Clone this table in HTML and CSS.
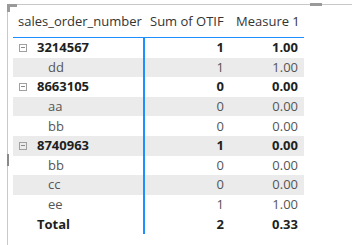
FILE: index.html
```html
<!DOCTYPE html>
<html>
<head>
<meta charset="utf-8">
<link rel="stylesheet" href="styles.css">
</head>
<body>
<div class="frame">
  <span class="corner"></span>
  <span class="grip"></span>
  <span class="edge-handle"></span>
  <div class="matrix">
    <div class="row head">
      <div class="c c1">sales_order_number</div>
      <div class="c c2">Sum of OTIF</div>
      <div class="c c3">Measure 1</div>
    </div>
    <div class="row group">
      <div class="c c1"><span class="toggle"></span>3214567</div>
      <div class="c c2 num">1</div>
      <div class="c c3 num">1.00</div>
    </div>
    <div class="row child shade">
      <div class="c c1">dd</div>
      <div class="c c2 num">1</div>
      <div class="c c3 num">1.00</div>
    </div>
    <div class="row group">
      <div class="c c1"><span class="toggle"></span>8663105</div>
      <div class="c c2 num">0</div>
      <div class="c c3 num">0.00</div>
    </div>
    <div class="row child shade">
      <div class="c c1">aa</div>
      <div class="c c2 num">0</div>
      <div class="c c3 num">0.00</div>
    </div>
    <div class="row child">
      <div class="c c1">bb</div>
      <div class="c c2 num">0</div>
      <div class="c c3 num">0.00</div>
    </div>
    <div class="row group shade">
      <div class="c c1"><span class="toggle"></span>8740963</div>
      <div class="c c2 num">1</div>
      <div class="c c3 num">0.00</div>
    </div>
    <div class="row child">
      <div class="c c1">bb</div>
      <div class="c c2 num">0</div>
      <div class="c c3 num">0.00</div>
    </div>
    <div class="row child shade">
      <div class="c c1">cc</div>
      <div class="c c2 num">0</div>
      <div class="c c3 num">0.00</div>
    </div>
    <div class="row child">
      <div class="c c1">ee</div>
      <div class="c c2 num">1</div>
      <div class="c c3 num">1.00</div>
    </div>
    <div class="row total">
      <div class="c c1">Total</div>
      <div class="c c2 num">2</div>
      <div class="c c3 num">0.33</div>
    </div>
  </div>
</div>
</body>
</html>
```

FILE: styles.css
```css
html, body {
  margin: 0;
  padding: 0;
  background: #ffffff;
}
body {
  font-family: "Open Sans", "Noto Sans", sans-serif;
  font-size: 13px;
  color: #252423;
  overflow: hidden;
}
.frame {
  position: relative;
  margin: 4px 0 0 7px;
  height: 241px;
  border-top: 1px solid #c8c8c8;
  border-left: 1px solid #c8c8c8;
  padding-left: 5px;
}
.corner {
  position: absolute;
  left: -1px;
  top: -1px;
  width: 10px;
  height: 8px;
  border-top: 3px solid #9a9a9a;
  border-left: 3px solid #9a9a9a;
  box-sizing: border-box;
}
.grip {
  position: absolute;
  left: 302px;
  top: -2px;
  width: 12px;
  height: 3px;
  background: #9a9a9a;
}
.edge-handle {
  position: absolute;
  left: -1px;
  top: 149px;
  width: 2px;
  height: 12px;
  background: #8a8a8a;
}
.matrix {
  width: 291px;
}
.row {
  display: grid;
  grid-template-columns: 132px 85px 74px;
  height: 19.6px;
  align-items: stretch;
}
.c {
  display: flex;
  align-items: center;
  white-space: nowrap;
  line-height: 1;
}
.c1 {
  border-right: 2px solid #1e8fff;
  box-sizing: border-box;
}
.num {
  justify-content: flex-end;
  padding-right: 6px;
}
.head {
  height: 32px;
  border-bottom: 1px solid #1e8fff;
  color: #333333;
}
.head .c1 {
  border-right: none;
  padding-left: 5px;
}
.head .c2 {
  padding-left: 5px;
}
.head .c3 {
  padding-left: 6px;
}
.shade {
  background: #ebebeb;
}
.group,
.total {
  font-weight: 700;
  color: #201f1e;
}
.group .c1 {
  padding-left: 6px;
}
.toggle {
  display: inline-block;
  width: 8px;
  height: 8px;
  box-sizing: border-box;
  border: 1px solid #a0a0a0;
  margin-right: 10px;
  position: relative;
}
.toggle::after {
  content: "";
  position: absolute;
  left: 1px;
  right: 1px;
  top: 2px;
  height: 1px;
  background: #8a8a8a;
}
.child {
  color: #555555;
}
.child .c1 {
  padding-left: 35px;
}
.total .c1 {
  padding-left: 24px;
}
```
